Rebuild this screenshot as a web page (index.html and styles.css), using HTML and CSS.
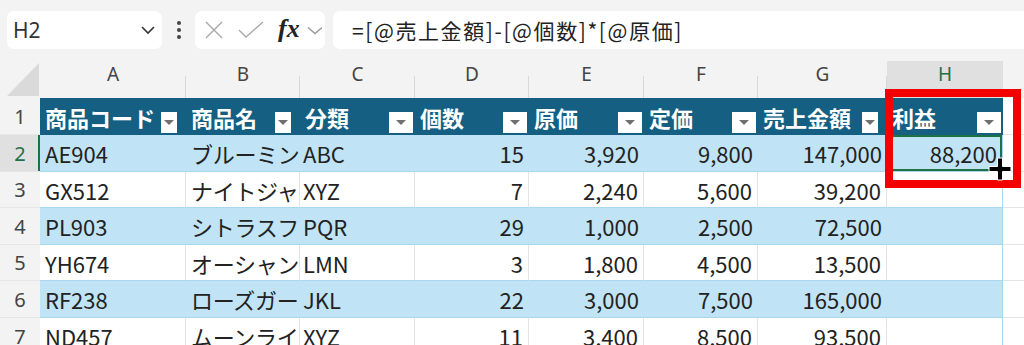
FILE: index.html
```html
<!DOCTYPE html>
<html lang="ja">
<head>
<meta charset="utf-8">
<link rel="stylesheet" href="styles.css">
</head>
<body>
<div class="toolbar">
  <div class="namebox">
    <span class="ref">H2</span>
    <svg class="chev" width="16" height="10" viewBox="0 0 16 10"><path d="M2 2 L8 8 L14 2" fill="none" stroke="#333" stroke-width="1.6"/></svg>
  </div>
  <div class="kebab"><i></i><i></i><i></i></div>
  <div class="fxbox">
    <svg class="icon-x" width="20" height="18" viewBox="0 0 20 18"><path d="M2 1 L18 17 M18 1 L2 17" stroke="#a8a8a8" stroke-width="1.4" fill="none"/></svg>
    <svg class="icon-check" width="26" height="18" viewBox="0 0 26 18"><path d="M1 9 L8 16 L25 1" stroke="#a8a8a8" stroke-width="1.4" fill="none"/></svg>
    <span class="fx">fx</span>
    <svg class="chev-s" width="16" height="9" viewBox="0 0 16 9"><path d="M1 1.5 L8 7.5 L15 1.5" fill="none" stroke="#999" stroke-width="1.4"/></svg>
  </div>
  <div class="formula">=[@売上金額]-[@個数]*[@原価]</div>
</div>

<div class="sheet">
  <div class="row colhead">
    <div class="corner"><svg width="40" height="40" viewBox="0 0 40 40"><polygon points="7,38 39,38 39,5" fill="#dadada"/></svg></div>
    <div class="col">A</div><div class="col">B</div><div class="col">C</div><div class="col">D</div>
    <div class="col">E</div><div class="col">F</div><div class="col">G</div><div class="col sel">H</div><div class="col end"></div>
  </div>

  <div class="row thead">
    <div class="rh">1</div>
    <div class="th"><span class="tt">商品コード</span><span class="fb narrow"></span></div>
    <div class="th"><span class="tt">商品名</span><span class="fb narrow"></span></div>
    <div class="th"><span class="tt">分類</span><span class="fb"></span></div>
    <div class="th"><span class="tt">個数</span><span class="fb"></span></div>
    <div class="th"><span class="tt">原価</span><span class="fb"></span></div>
    <div class="th"><span class="tt">定価</span><span class="fb"></span></div>
    <div class="th"><span class="tt">売上金額</span><span class="fb narrow"></span></div>
    <div class="th"><span class="tt">利益</span><span class="fb"></span></div>
    <div class="blank"></div>
  </div>

  <div class="row band">
    <div class="rh sel">2</div>
    <div class="td">AE904</div><div class="td kana">ブルーミン</div><div class="td cat">ABC</div>
    <div class="td num">15</div><div class="td num">3,920</div><div class="td num">9,800</div>
    <div class="td num">147,000</div><div class="td num active">88,200</div><div class="blank"></div>
  </div>
  <div class="row plain">
    <div class="rh">3</div>
    <div class="td">GX512</div><div class="td kana">ナイトジャ</div><div class="td cat">XYZ</div>
    <div class="td num">7</div><div class="td num">2,240</div><div class="td num">5,600</div>
    <div class="td num">39,200</div><div class="td num"></div><div class="blank"></div>
  </div>
  <div class="row band">
    <div class="rh">4</div>
    <div class="td">PL903</div><div class="td kana">シトラスフ</div><div class="td cat">PQR</div>
    <div class="td num">29</div><div class="td num">1,000</div><div class="td num">2,500</div>
    <div class="td num">72,500</div><div class="td num"></div><div class="blank"></div>
  </div>
  <div class="row plain">
    <div class="rh">5</div>
    <div class="td">YH674</div><div class="td kana">オーシャン</div><div class="td cat">LMN</div>
    <div class="td num">3</div><div class="td num">1,800</div><div class="td num">4,500</div>
    <div class="td num">13,500</div><div class="td num"></div><div class="blank"></div>
  </div>
  <div class="row band">
    <div class="rh">6</div>
    <div class="td">RF238</div><div class="td kana">ローズガー</div><div class="td cat">JKL</div>
    <div class="td num">22</div><div class="td num">3,000</div><div class="td num">7,500</div>
    <div class="td num">165,000</div><div class="td num"></div><div class="blank"></div>
  </div>
  <div class="row plain">
    <div class="rh">7</div>
    <div class="td">ND457</div><div class="td kana">ムーンライ</div><div class="td cat">XYZ</div>
    <div class="td num">11</div><div class="td num">3,400</div><div class="td num">8,500</div>
    <div class="td num">93,500</div><div class="td num"></div><div class="blank"></div>
  </div>

  <div class="redbox"></div>
  <svg class="cursor" width="24" height="24" viewBox="0 0 24 24"><path d="M9.5 1 H14.5 V9.5 H23 V14.5 H14.5 V23 H9.5 V14.5 H1 V9.5 H9.5 Z" fill="#000" stroke="#fff" stroke-width="1"/></svg>
</div>
</body>
</html>
```

FILE: styles.css
```css
* { box-sizing: border-box; }
html, body { margin: 0; padding: 0; }
body {
  width: 1024px;
  height: 345px;
  overflow: hidden;
  background: #f3f3f3;
  font-family: "Noto Sans CJK JP", "Noto Sans", sans-serif;
}

/* toolbar */
.toolbar {
  height: 58px;
  display: flex;
  align-items: flex-start;
  padding-top: 11px;
  padding-left: 7px;
  background: #f3f3f3;
}
.namebox {
  width: 155px;
  height: 38px;
  background: #fff;
  border-radius: 7px;
  display: flex;
  align-items: center;
  justify-content: space-between;
  padding: 0 6px 0 6px;
}
.ref {
  font-family: "Noto Sans", sans-serif;
  font-size: 21px;
  color: #333;
  line-height: 1;
}
.kebab {
  width: 33px;
  height: 38px;
  display: flex;
  flex-direction: column;
  align-items: center;
  justify-content: center;
  gap: 3px;
}
.kebab i {
  width: 4px;
  height: 4px;
  border-radius: 50%;
  background: #444;
}
.fxbox {
  width: 130px;
  height: 38px;
  background: #fff;
  border-radius: 7px;
  display: flex;
  align-items: center;
  padding-left: 9px;
}
.icon-x { margin-right: 14px; }
.icon-check { margin-right: 14px; }
.fx {
  font-family: "Liberation Serif", "DejaVu Serif", serif;
  font-style: italic;
  font-weight: 700;
  font-size: 26px;
  line-height: 1;
  color: #222;
  margin-right: 7px;
  margin-top: -2px;
}
.formula {
  flex: 1;
  height: 38px;
  margin-left: 8px;
  background: #fff;
  border-radius: 7px 0 0 7px;
  display: flex;
  align-items: center;
  padding-left: 19px;
  font-family: "Noto Sans CJK JP", sans-serif;
  font-size: 21px;
  letter-spacing: 1.6px;
  color: #222;
  white-space: nowrap;
}

/* sheet */
.sheet {
  position: relative;
  display: grid;
  grid-template-rows: 40px 37px 37px 36px 37px 36px 37px 37px;
}
.row {
  display: grid;
  grid-template-columns: 40px 146px 114px 115px 114px 115px 114px 129px 116px 1fr;
}

/* column header row */
.colhead { background: #f3f3f3; }
.corner svg { display: block; }
.col {
  display: flex;
  align-items: center;
  justify-content: center;
  padding-bottom: 8px;
  font-family: "Noto Sans", sans-serif;
  font-size: 19px;
  color: #444;
  background: linear-gradient(#d8d8d8, #d8d8d8) right bottom / 1px 22px no-repeat;
}
.col.sel {
  color: #1e7145;
  background: linear-gradient(#e0e0e0, #e0e0e0) bottom / 100% 37px no-repeat;
}
.col.end { background: none; }

/* row header */
.rh {
  background: #f3f3f3;
  display: flex;
  align-items: center;
  justify-content: center;
  font-family: "Noto Sans", sans-serif;
  font-size: 20px;
  color: #444;
  border-bottom: 1px solid #e6e6e6;
}
.rh.sel {
  background: #e0e0e0;
  color: #1e7145;
  box-shadow: inset -2px 0 0 #1e7145;
}

/* table header */
.th {
  background: #156082;
  display: flex;
  align-items: center;
  padding-left: 5px;
}
.tt {
  flex: 1;
  min-width: 0;
  white-space: nowrap;
  color: #fff;
  font-weight: 700;
  font-size: 22px;
  line-height: 1;
}
.fb {
  flex: none;
  align-self: flex-end;
  width: 24px;
  height: 21px;
  margin: 0 2px 2px 0;
  background: #fff;
  display: flex;
  align-items: center;
  justify-content: center;
  position: relative;
}
.fb.narrow {
  width: 16px;
  margin-right: 9px;
}
.fb::before {
  content: "";
  border-left: 5px solid transparent;
  border-right: 5px solid transparent;
  border-top: 5px solid #707070;
}

/* data cells */
.td {
  display: flex;
  align-items: center;
  padding: 0 5px;
  font-size: 22px;
  color: #222;
  white-space: nowrap;
  border-bottom: 1px solid #a8d7ee;
}
.td.kana { padding: 0 0 0 5px; letter-spacing: -0.3px; }
.td.cat { padding-left: 3px; }
.td.num { justify-content: flex-end; }
.band .td { background: #c0e4f5; }
.plain .td {
  background: #fff;
  border-right: 1px solid #e4e4e4;
}
.plain .td:nth-child(9) { border-right-color: #a8d7ee; }
.band .td:nth-child(9) { border-right: 1px solid #a8d7ee; }
.td.active { box-shadow: inset 0 0 0 2px #1e7145; }

.blank {
  background: #fff;
  border-bottom: 1px solid #e4e4e4;
}

/* overlays */
.redbox {
  position: absolute;
  left: 885px;
  top: 31px;
  width: 136px;
  height: 99px;
  border: 8px solid #f50000;
}
.cursor {
  position: absolute;
  left: 988px;
  top: 99px;
}
```
